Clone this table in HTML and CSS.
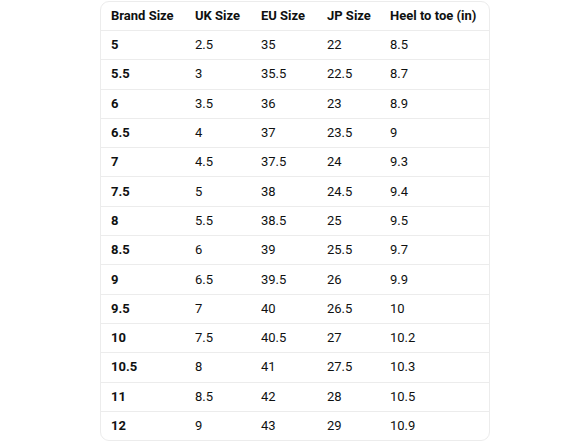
FILE: index.html
```html
<!DOCTYPE html>
<html>
<head>
<meta charset="utf-8">
<link rel="stylesheet" href="styles.css">
</head>
<body>
<div class="card">
<table class="sizes">
<thead>
<tr><th class="c1">Brand Size</th><th class="c2">UK Size</th><th class="c3">EU Size</th><th class="c4">JP Size</th><th class="c5">Heel to toe (in)</th></tr>
</thead>
<tbody>
<tr><td class="b">5</td><td>2.5</td><td>35</td><td>22</td><td>8.5</td></tr>
<tr><td class="b">5.5</td><td>3</td><td>35.5</td><td>22.5</td><td>8.7</td></tr>
<tr><td class="b">6</td><td>3.5</td><td>36</td><td>23</td><td>8.9</td></tr>
<tr><td class="b">6.5</td><td>4</td><td>37</td><td>23.5</td><td>9</td></tr>
<tr><td class="b">7</td><td>4.5</td><td>37.5</td><td>24</td><td>9.3</td></tr>
<tr><td class="b">7.5</td><td>5</td><td>38</td><td>24.5</td><td>9.4</td></tr>
<tr><td class="b">8</td><td>5.5</td><td>38.5</td><td>25</td><td>9.5</td></tr>
<tr><td class="b">8.5</td><td>6</td><td>39</td><td>25.5</td><td>9.7</td></tr>
<tr><td class="b">9</td><td>6.5</td><td>39.5</td><td>26</td><td>9.9</td></tr>
<tr><td class="b">9.5</td><td>7</td><td>40</td><td>26.5</td><td>10</td></tr>
<tr><td class="b">10</td><td>7.5</td><td>40.5</td><td>27</td><td>10.2</td></tr>
<tr><td class="b">10.5</td><td>8</td><td>41</td><td>27.5</td><td>10.3</td></tr>
<tr><td class="b">11</td><td>8.5</td><td>42</td><td>28</td><td>10.5</td></tr>
<tr><td class="b">12</td><td>9</td><td>43</td><td>29</td><td>10.9</td></tr>
</tbody>
</table>
</div>
</body>
</html>
```
FILE: styles.css
```css
html, body {
  margin: 0;
  padding: 0;
  background: #ffffff;
}
body {
  font-family: Roboto, "Noto Sans", sans-serif;
  color: #0f1111;
  font-size: 13px;
}
.card {
  width: 388px;
  margin: 1px 0 0 100px;
  border: 1px solid #ececec;
  border-radius: 9px;
  overflow: hidden;
}
.sizes {
  width: 100%;
  border-collapse: collapse;
  table-layout: fixed;
}
.sizes th, .sizes td {
  padding: 0 0 0 10px;
  text-align: left;
  vertical-align: middle;
  white-space: nowrap;
  line-height: 16px;
}
.sizes th {
  height: 28px;
  font-weight: 700;
}
.sizes td {
  height: 28.3px;
}
.sizes tr {
  border-bottom: 1px solid #ececec;
}
.sizes tbody tr:last-child {
  border-bottom: none;
}
.sizes td.b {
  font-weight: 700;
}
.c1 { width: 74px; }
.c2 { width: 56px; }
.c3 { width: 56px; }
.c4 { width: 53px; }
```
